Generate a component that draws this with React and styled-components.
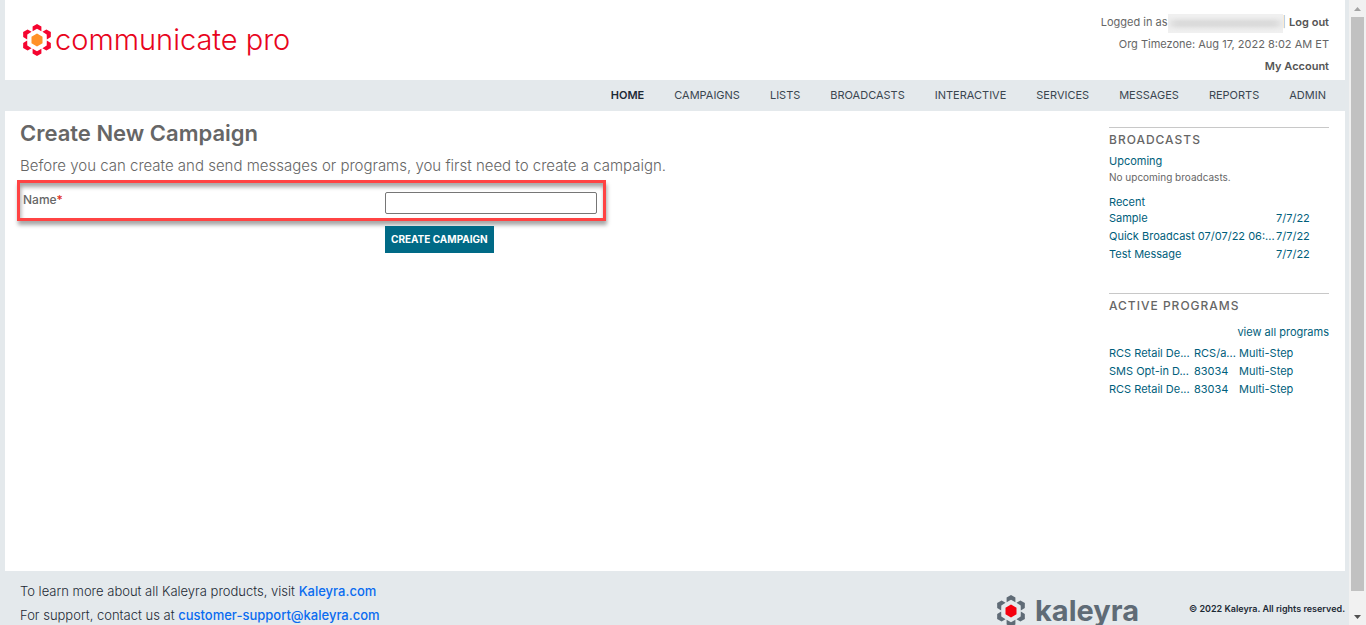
import styled, { createGlobalStyle } from "styled-components";

const navItems = [
  "Home",
  "Campaigns",
  "Lists",
  "Broadcasts",
  "Interactive",
  "Services",
  "Messages",
  "Reports",
  "Admin",
];

const recentBroadcasts = [
  { name: "Sample", date: "7/7/22" },
  { name: "Quick Broadcast 07/07/22 06:...", date: "7/7/22" },
  { name: "Test Message", date: "7/7/22" },
];

const programs = [
  { name: "RCS Retail De...", code: "RCS/a...", type: "Multi-Step" },
  { name: "SMS Opt-in D...", code: "83034", type: "Multi-Step" },
  { name: "RCS Retail De...", code: "83034", type: "Multi-Step" },
];

function Flower({ petal, core }) {
  return (
    <svg width="32" height="34" viewBox="-16 -17 32 34" aria-hidden="true">
      {[0, 60, 120, 180, 240, 300].map((angle) => (
        <polygon
          key={angle}
          transform={`rotate(${angle})`}
          fill={petal}
          points="0,-16 4.4,-13.4 4.4,-8.8 0,-11.2 -4.4,-8.8 -4.4,-13.4"
        />
      ))}
      <polygon fill={core} points="0,-6.4 5.5,-3.2 5.5,3.2 0,6.4 -5.5,3.2 -5.5,-3.2" />
    </svg>
  );
}

function Header() {
  return (
    <TopBar>
      <Brand href="#">
        <Flower petal="#f5042f" core="#ff9127" />
        <BrandName>communicate pro</BrandName>
      </Brand>
      <Account>
        <div>
          Logged in as
          <HiddenUser />
          <Divider>|</Divider> <AccountLink href="#">Log out</AccountLink>
        </div>
        <div>Org Timezone: Aug 17, 2022 8:02 AM ET</div>
        <div>
          <AccountLink href="#">My Account</AccountLink>
        </div>
      </Account>
    </TopBar>
  );
}

function CampaignForm() {
  return (
    <Content>
      <Title>Create New Campaign</Title>
      <Intro>
        Before you can create and send messages or programs, you first need to
        create a campaign.
      </Intro>
      <Form onSubmit={(e) => e.preventDefault()}>
        <Field>
          <label htmlFor="campaign-name">
            Name<em>*</em>
          </label>
          <TextInput id="campaign-name" type="text" required />
        </Field>
        <SubmitButton type="submit">Create Campaign</SubmitButton>
      </Form>
    </Content>
  );
}

function Sidebar() {
  return (
    <SideColumn>
      <Panel>
        <PanelTitle>Broadcasts</PanelTitle>
        <a href="#">Upcoming</a>
        <p>No upcoming broadcasts.</p>
        <a href="#">Recent</a>
        <BroadcastTable>
          <tbody>
            {recentBroadcasts.map((item) => (
              <tr key={item.name}>
                <td>
                  <a href="#">{item.name}</a>
                </td>
                <td>
                  <a href="#">{item.date}</a>
                </td>
              </tr>
            ))}
          </tbody>
        </BroadcastTable>
      </Panel>
      <Panel>
        <PanelTitle>Active Programs</PanelTitle>
        <ViewAll href="#">view all programs</ViewAll>
        <ProgramTable>
          <tbody>
            {programs.map((item, i) => (
              <tr key={i}>
                <td>
                  <a href="#">{item.name}</a>
                </td>
                <td>
                  <a href="#">{item.code}</a>
                </td>
                <td>
                  <a href="#">{item.type}</a>
                </td>
              </tr>
            ))}
          </tbody>
        </ProgramTable>
      </Panel>
    </SideColumn>
  );
}

function Footer() {
  return (
    <FooterBar>
      <FooterText>
        <div>
          To learn more about all Kaleyra products, visit{" "}
          <a href="#">Kaleyra.com</a>
        </div>
        <div>
          For support, contact us at{" "}
          <a href="#">customer-support@kaleyra.com</a>
        </div>
      </FooterText>
      <FooterBrand>
        <Flower petal="#5f6b76" core="#f5000f" />
        <span>kaleyra</span>
      </FooterBrand>
      <Copyright>© 2022 Kaleyra. All rights reserved.</Copyright>
    </FooterBar>
  );
}

export default function App() {
  return (
    <Screen>
      <GlobalStyle />
      <Page>
        <Header />
        <Nav>
          {navItems.map((item, i) => (
            <NavLink key={item} href="#" $active={i === 0}>
              {item}
            </NavLink>
          ))}
        </Nav>
        <Main>
          <CampaignForm />
          <Sidebar />
        </Main>
        <Footer />
      </Page>
      <Scrollbar aria-hidden="true">
        <svg width="17" height="17" viewBox="0 0 17 17">
          <path d="M5 11 L8.500 7 L12 11 Z" fill="#a3a3a3" />
        </svg>
        <Thumb />
        <svg width="17" height="17" viewBox="0 0 17 17">
          <path d="M5 7 L8.500 11 L12 7 Z" fill="#505050" />
        </svg>
      </Scrollbar>
    </Screen>
  );
}

const GlobalStyle = createGlobalStyle`
  * {
    box-sizing: border-box;
  }

  body {
    margin: 0;
    overflow: hidden;
    background: #e4e9ec;
    color: #666;
    font-family: Inter, "Liberation Sans", sans-serif;
    font-size: 11px;
    line-height: 18px;
  }

  a {
    color: #005e7b;
    text-decoration: none;
  }
`;

const Screen = styled.div`
  display: flex;
  height: 100vh;
  overflow: hidden;
`;

const Page = styled.div`
  flex: 1;
  display: flex;
  flex-direction: column;
  padding: 0 4px 0 5px;
`;

const TopBar = styled.header`
  display: flex;
  justify-content: space-between;
  padding: 11px 16px 3px;
  background: #fff;
`;

const Brand = styled.a`
  display: flex;
  align-items: center;
  gap: 2px;
  height: 58px;
`;

const BrandName = styled.span`
  color: #e8041c;
  font-size: 29px;
  font-weight: 300;
  line-height: 32px;
`;

const Account = styled.div`
  text-align: right;
  line-height: 22px;
`;

const AccountLink = styled.a`
  color: #555;
  font-weight: 600;
`;

const Divider = styled.span`
  color: #999;
  font-weight: 300;
`;

const HiddenUser = styled.span`
  display: inline-block;
  width: 115px;
  height: 19px;
  vertical-align: middle;
  background: linear-gradient(
    #f0f0f0 10%,
    #d8d8d8 40%,
    #d8d8d8 60%,
    #f0f0f0 95%
  );
  box-shadow: inset 0 0 8px 3px #f0f0f0;
`;

const Nav = styled.nav`
  display: flex;
  flex-wrap: wrap;
  justify-content: flex-end;
  gap: 30px;
  padding: 6px 19px 7px;
`;

const NavLink = styled.a`
  color: ${({ $active }) => ($active ? "#1d2a35" : "#3a4650")};
  font-weight: ${({ $active }) => ($active ? 600 : 400)};
  text-transform: uppercase;
`;

const Main = styled.main`
  flex: 1 0 460px;
  display: flex;
  justify-content: space-between;
  padding: 0 16px 0 15px;
  background: #fff;
`;

const Content = styled.section`
  flex: 1;
`;

const Title = styled.h1`
  margin: 8px 0 4px;
  font-size: 22px;
  font-weight: 600;
  line-height: 28px;
`;

const Intro = styled.p`
  margin: 0;
  font-size: 15px;
  font-weight: 300;
  line-height: 30px;
`;

const Form = styled.form`
  width: 589px;
  max-width: 100%;
  margin: -1px -3px 0;
`;

const Field = styled.div`
  display: flex;
  justify-content: space-between;
  height: 41px;
  padding: 8px 6px 4px 3px;
  border: 3px solid #ff4343;
  box-shadow: 1px 4px 4px rgba(0, 0, 0, 0.35),
    inset 1px 4px 4px rgba(0, 0, 0, 0.35);

  label {
    font-size: 12px;
    font-weight: 500;
  }

  em {
    color: #e0301e;
    font-style: normal;
  }
`;

const TextInput = styled.input`
  width: 212px;
  height: 22px;
  margin-top: 1px;
  border: 1px solid #767676;
  border-radius: 2px;
`;

const SubmitButton = styled.button`
  display: block;
  margin: 5px 0 0 368px;
  padding: 0 6px;
  border: 0;
  background: #006a86;
  color: #fff;
  font-family: inherit;
  font-size: 10px;
  font-weight: 700;
  line-height: 27px;
  text-transform: uppercase;
`;

const SideColumn = styled.aside`
  width: 220px;
  padding-top: 16px;
`;

const Panel = styled.section`
  margin-bottom: 30px;
  border-top: 1px solid #c8c8c8;

  p {
    margin: 0 0 9px;
    font-size: 10px;
    line-height: 16px;
  }

  > a {
    display: block;
    line-height: 16px;
  }
`;

const PanelTitle = styled.h2`
  margin: 3px 0 4px;
  font-size: 12px;
  font-weight: 500;
  letter-spacing: 1px;
  line-height: 18px;
  text-transform: uppercase;
`;

const ViewAll = styled.a`
  margin: 9px 0 4px;
  text-align: right;
`;

const SideTable = styled.table`
  border-collapse: collapse;
  table-layout: fixed;

  td {
    padding: 0;
    white-space: nowrap;
  }
`;

const BroadcastTable = styled(SideTable)`
  width: 200px;
  margin-top: -1px;

  td:last-child {
    width: 33px;
  }
`;

const ProgramTable = styled(SideTable)`
  width: 200px;

  td:first-child {
    width: 85px;
  }

  td:nth-child(2) {
    width: 45px;
  }
`;

const FooterBar = styled.footer`
  display: flex;
  align-items: flex-start;
  padding: 8px 0 0 15px;
  color: #1d2a35;
`;

const FooterText = styled.div`
  flex: 1;
  font-size: 13px;
  font-weight: 300;
  line-height: 24px;

  a {
    color: #0a6cf0;
    font-weight: 500;
  }
`;

const FooterBrand = styled.div`
  display: flex;
  align-items: center;
  gap: 8px;
  margin: 15px 50px 0 0;
  color: #5f6b76;
  font-size: 29px;
  font-weight: 700;
  line-height: 24px;
`;

const Copyright = styled.div`
  margin-top: 21px;
  font-size: 9px;
  font-weight: 600;
`;

const Scrollbar = styled.div`
  display: flex;
  flex-direction: column;
  width: 17px;
  background: #f1f1f1;
`;

const Thumb = styled.div`
  flex: 1;
  margin: 0 2px 17px;
  background: #c1c1c1;
`;
